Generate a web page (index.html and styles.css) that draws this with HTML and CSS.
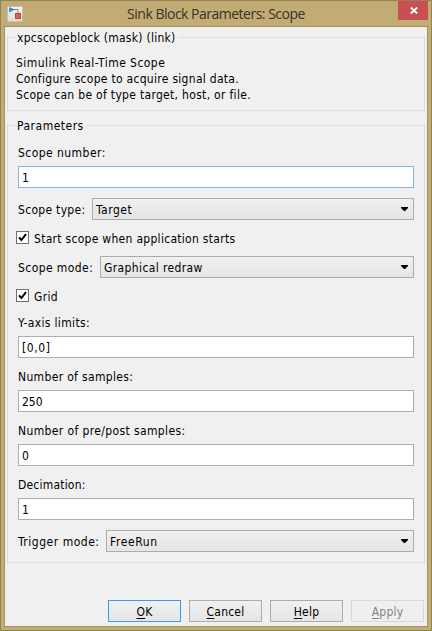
FILE: index.html
```html
<!DOCTYPE html>
<html lang="en">
<head>
<meta charset="utf-8">
<title>Sink Block Parameters: Scope</title>
<link rel="stylesheet" href="styles.css">
</head>
<body>
<div class="window">
  <header class="titlebar">
    <svg class="app-icon" width="16" height="16" viewBox="0 0 16 16">
      <defs><linearGradient id="tile" x1="0" y1="0" x2="0" y2="1"><stop offset="0" stop-color="#f4f4f6"/><stop offset="1" stop-color="#dcdde2"/></linearGradient></defs>
      <rect x=".5" y=".5" width="15" height="15" rx="1" fill="url(#tile)" stroke="#c3beb8"/>
      <path d="M7 3.5h4V8" fill="none" stroke="#7f858c"/>
      <path d="M2 1 8 3.5 2 6.5z" fill="#3a8fc0"/>
      <rect x="8.5" y="7.5" width="5" height="5" fill="#e0643f" stroke="#bb4a2c"/>
    </svg>
    <h1 class="title">Sink Block Parameters: Scope</h1>
    <button class="close" aria-label="Close"><svg width="8" height="7" viewBox="0 0 8 7"><path d="M.8.5 7.2 6.5M7.2.5.8 6.5" stroke="#fff" stroke-width="1.8"/></svg></button>
  </header>
  <main class="client">
    <section class="group about">
      <h2 class="legend"><span class="t-mask">xpcscopeblock (mask) (link)</span></h2>
      <p><span class="t-real">Simulink Real-Time Scope</span></p>
      <p><span class="t-config">Configure scope to acquire signal data.</span></p>
      <p><span class="t-can">Scope can be of type target, host, or file.</span></p>
    </section>
    <section class="group params">
      <h2 class="legend"><span class="t-params">Parameters</span></h2>
      <div class="label"><span class="t-number">Scope number:</span></div>
      <div class="input focused">1</div>
      <div class="row"><span class="t-type">Scope type:</span><div class="select type"><span class="t-target">Target</span><i class="arrow"></i></div></div>
      <div class="check"><svg class="box" width="13" height="13" viewBox="0 0 13 13"><rect x=".5" y=".5" width="12" height="12" fill="#fff" stroke="#707070"/><path d="M3 6.3 5.4 9 10 3.2" fill="none" stroke="#000" stroke-width="2"/></svg><span class="t-start">Start scope when application starts</span></div>
      <div class="row mode-row"><span class="t-mode">Scope mode:</span><div class="select mode"><span class="t-redraw">Graphical redraw</span><i class="arrow"></i></div></div>
      <div class="check"><svg class="box" width="13" height="13" viewBox="0 0 13 13"><rect x=".5" y=".5" width="12" height="12" fill="#fff" stroke="#707070"/><path d="M3 6.3 5.4 9 10 3.2" fill="none" stroke="#000" stroke-width="2"/></svg><span class="t-grid">Grid</span></div>
      <div class="label after-check"><span class="t-limits">Y-axis limits:</span></div>
      <div class="input"><span class="t-range">[0,0]</span></div>
      <div class="label next"><span class="t-samples">Number of samples:</span></div>
      <div class="input">250</div>
      <div class="label next"><span class="t-prepost">Number of pre/post samples:</span></div>
      <div class="input">0</div>
      <div class="label next"><span class="t-decim">Decimation:</span></div>
      <div class="input">1</div>
      <div class="row"><span class="t-trigger">Trigger mode:</span><div class="select trigger"><span class="t-free">FreeRun</span><i class="arrow"></i></div></div>
    </section>
    <footer class="buttons">
      <button class="btn default"><span><u>O</u>K</span></button>
      <button class="btn"><span><u>C</u>ancel</span></button>
      <button class="btn"><span><u>H</u>elp</span></button>
      <button class="btn disabled"><span><u>A</u>pply</span></button>
    </footer>
  </main>
</div>
</body>
</html>
```
FILE: styles.css
```css
* { box-sizing: border-box; }
body { margin: 0; font: 12px/16px "DejaVu Sans Condensed", "DejaVu Sans", sans-serif; font-stretch: condensed; color: #000; }
h1, h2, p { margin: 0; font-size: inherit; font-weight: normal; }
button { font: inherit; color: inherit; padding: 0; }
.window { width: 432px; height: 631px; background: #c2ac74; border: 1px solid #928254; display: flex; flex-direction: column; padding: 0 3px 3px; }
.titlebar { height: 25px; position: relative; flex: none; }
.app-icon { position: absolute; left: 3px; top: 5px; }
.title { position: absolute; left: 0; right: 0; top: 3px; text-align: center; font: 14px/20px "Open Sans", sans-serif; letter-spacing: -.5px; color: #35322b; }
.close { position: absolute; right: 0; top: 0; width: 30px; height: 19px; border: 0; padding-left: 2px; background: #c75050; display: flex; align-items: center; justify-content: center; }
.client { flex: 1; background: #f0f0f0; border: 1px solid #a4915f; padding: 10px 2px 0; }
.group { border: 1px solid #dcdcdc; position: relative; }
.legend { position: absolute; left: 8px; top: -9px; background: #f0f0f0; padding: 0 2px 0 1px; line-height: 18px; }
.about { height: 74px; padding: 17px 8px 0; }
.params { height: 438px; margin-top: 14px; padding: 18px 10px 0; }
.label { height: 22px; line-height: 18px; }
.input { height: 22px; background: #fff; border: 1px solid #abadb3; padding-left: 3px; line-height: 22px; }
.input.focused { border-color: #7eb4ea; }
.row { display: flex; justify-content: space-between; margin-top: 10px; height: 22px; line-height: 24px; }
.select { height: 22px; border: 1px solid #acacac; background: linear-gradient(#f0f0f0, #e5e5e5); display: flex; justify-content: space-between; line-height: 22px; padding: 0 5px 0 3px; }
.type { width: 322px; }
.mode { width: 314px; }
.trigger { width: 308px; }
.arrow { width: 7px; height: 4px; margin-top: 8px; background: #000; clip-path: polygon(0 0, 100% 0, 100% 25%, 58% 100%, 42% 100%, 0 25%); }
.check { display: flex; gap: 5px; margin: 11px 0 0 -2px; height: 14px; line-height: 16px; }
.box { flex: none; }
.row.mode-row { margin-top: 11px; }
.after-check { margin-top: 11px; }
.next { margin-top: 10px; }
.buttons { display: flex; gap: 8px; justify-content: flex-end; margin: 37px 1px 0 0; }
.btn { width: 73px; height: 22px; border: 1px solid #acacac; background: linear-gradient(#f0f0f0, #e5e5e5); text-align: center; line-height: 22px; letter-spacing: .2px; }
.btn span { display: block; height: 20px; }
.btn.default { border-color: #3399ff; }
.btn.disabled { border-color: #d9d9d9; background: #efefef; color: #838383; }
u { text-underline-offset: 2px; }

/* Per-string tracking */
.t-mask { letter-spacing: .27px; }
.t-real { letter-spacing: .45px; }
.t-config, .t-start { letter-spacing: .29px; }
.t-can { letter-spacing: .31px; }
.t-params, .t-target { letter-spacing: .5px; }
.t-number { letter-spacing: .45px; }
.t-type, .t-grid { letter-spacing: .3px; }
.t-mode { letter-spacing: .42px; }
.t-redraw, .t-prepost { letter-spacing: .38px; }
.t-limits, .t-samples { letter-spacing: .34px; }
.t-decim { letter-spacing: .2px; }
.t-trigger { letter-spacing: .52px; }
.t-free, .t-range { letter-spacing: .6px; }
```
